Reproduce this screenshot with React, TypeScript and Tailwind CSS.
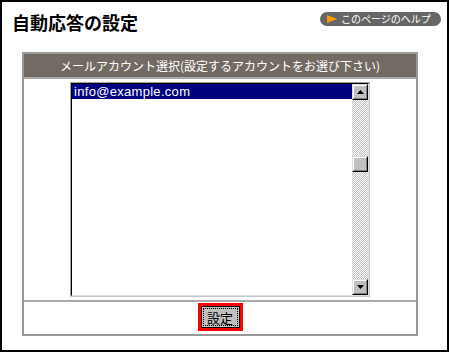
const jp = "font-['MS_PGothic','Noto_Sans_CJK_JP',sans-serif]";

function ScrollButton({ dir }: { dir: "up" | "down" }) {
  return (
    <div className="flex h-[16px] w-[16px] items-center justify-center border border-t-[#dfdfdf] border-l-[#dfdfdf] border-b-black border-r-black bg-[#c0c0c0]">
      <div className="flex h-full w-full items-center justify-center border border-t-white border-l-white border-b-[#808080] border-r-[#808080]">
        <svg width="7" height="4" viewBox="0 0 7 4">
          {dir === "up" ? <polygon points="3.5,0 7,4 0,4" fill="#000" /> : <polygon points="0,0 7,0 3.5,4" fill="#000" />}
        </svg>
      </div>
    </div>
  );
}

export default function App() {
  return (
    <div className={`flex h-[352px] w-[449px] flex-col border-2 border-black bg-white ${jp}`}>
      {/* Header */}
      <div className="flex h-[50px] items-start justify-between">
        <h1 className="ml-[10px] mt-[9px] text-[18px] font-bold leading-[22px] text-black">自動応答の設定</h1>
        <div className="mr-[6px] mt-[10px] flex h-[14px] w-[121px] items-center gap-[4px] rounded-full bg-[#666] pl-[7px]">
          <svg width="10" height="8" viewBox="0 0 10 8">
            <polygon points="0,0 10,4 0,8" fill="#f90" />
          </svg>
          <span className="text-[10px] leading-[14px] text-white">このページのヘルプ</span>
        </div>
      </div>

      {/* Table */}
      <div className="ml-[20px] flex h-[284px] w-[396px] flex-col border-2 border-[#999]">
        <div className="flex h-[23px] items-center justify-center bg-[#726b63] text-[12px] text-white">
          メールアカウント選択(設定するアカウントをお選び下さい)
        </div>
        <div className="flex h-[225px] items-center justify-center border-y-2 border-[#aaa]">
          <div className="h-[215px] w-[300px] border border-t-[#a0a0a0] border-l-[#a0a0a0] border-b-[#c8c8c8] border-r-[#c8c8c8]">
            <div className="flex h-full w-full border border-t-black border-l-black border-b-[#e0e0e0] border-r-[#e0e0e0]">
              <div className="flex-1 bg-white">
                <div className="h-[15px] bg-[#000080] pl-[2px] font-['Liberation_Sans',sans-serif] text-[13px] leading-[15px] tracking-[0.3px] text-white">
                  info@example.com
                </div>
              </div>
              <div className="flex w-[16px] flex-col">
                <ScrollButton dir="up" />
                <div className="flex flex-1 flex-col bg-[repeating-conic-gradient(#c0c0c0_0_25%,#fff_0_50%)] bg-[length:2px_2px]">
                  <div className="mt-[56px] h-[16px] w-[16px] border border-t-[#dfdfdf] border-l-[#dfdfdf] border-b-black border-r-black bg-[#c0c0c0]">
                    <div className="h-full w-full border border-t-white border-l-white border-b-[#808080] border-r-[#808080]" />
                  </div>
                </div>
                <ScrollButton dir="down" />
              </div>
            </div>
          </div>
        </div>
        <div className="flex h-[30px] items-center justify-center">
          <div className="border-[3px] border-[#f00]">
            <button className="flex h-[22px] w-[39px] items-center justify-center border border-black bg-[#c0c0c0] p-[1px]">
              <span className="flex h-full w-full items-center justify-center border border-dotted border-black text-[13px] leading-none text-black">
                設定
              </span>
            </button>
          </div>
        </div>
      </div>
    </div>
  );
}
